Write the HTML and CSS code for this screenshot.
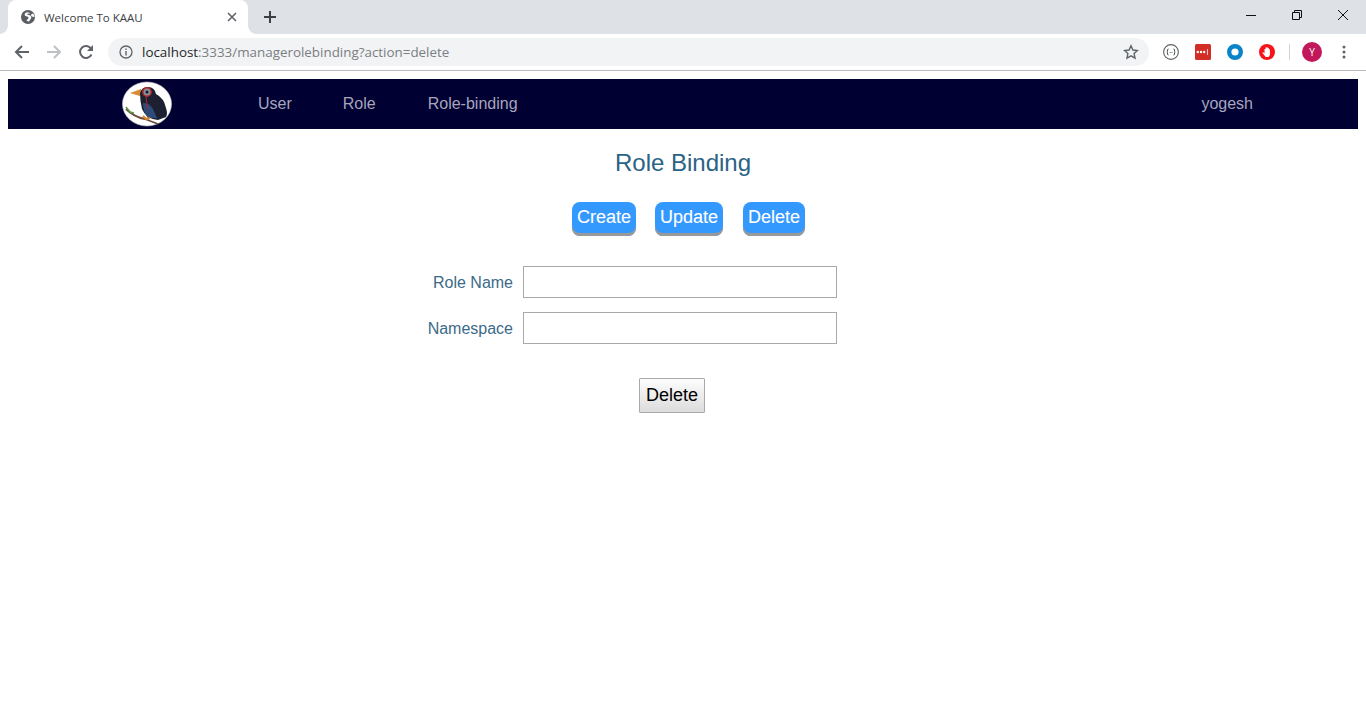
FILE: index.html
```html
<!DOCTYPE html>
<html lang="en">
<head>
<meta charset="utf-8">
<title>Welcome To KAAU</title>
<link rel="stylesheet" href="styles.css">
</head>
<body>
<header class="browser">
  <div class="tabstrip">
    <div class="tab">
      <svg class="favicon" width="16" height="16" viewBox="0 0 16 16"><circle cx="8" cy="8" r="7" fill="#5a5d61"/><path d="M8 3.200Q5 3.200 4.500 5.200q0 1.800 2.500 2.300 2 .3 1.500 1.700l-2 2.300q1.500 1.200 2.500 1 1.500-2.500 2-3 1-1.500-.5-2.700-1.500-.8-3-1-.8-.8.800-1.300 1.500 0 2-.2z" fill="#fff"/><path d="M13 4.500q-2 .5-2.300 1.700l1.800 1.500 2 .3q.2-2-1.500-3.500z" fill="#fff"/></svg>
      <span class="tab-title">Welcome To KAAU</span>
      <svg class="tab-close" width="10" height="10" viewBox="0 0 10 10"><path d="M1 1l8 8M9 1l-8 8" stroke="#5f6368" stroke-width="1.600" fill="none"/></svg>
    </div>
    <svg class="new-tab" width="12" height="12" viewBox="0 0 12 12"><path d="M6 0v12M0 6h12" stroke="#3c4043" stroke-width="2" fill="none"/></svg>
    <div class="window-controls">
      <svg width="10" height="10" viewBox="0 0 10 10"><path d="M0 5.500h10" stroke="#111" stroke-width="1" fill="none"/></svg>
      <svg width="10" height="10" viewBox="0 0 10 10"><path d="M.5 2.500h7v7h-7zM2.500 2.500v-2h7v7h-2" stroke="#111" stroke-width="1" fill="none"/></svg>
      <svg width="10" height="10" viewBox="0 0 10 10"><path d="M0 0l10 10M10 0L0 10" stroke="#111" stroke-width="1" fill="none"/></svg>
    </div>
  </div>
  <div class="toolbar">
    <svg class="tool back" width="16" height="16" viewBox="0 0 16 16"><path d="M15 8H2M8 2L2 8l6 6" stroke="#5f6368" stroke-width="2" fill="none"/></svg>
    <svg class="tool fwd" width="16" height="16" viewBox="0 0 16 16"><path d="M1 8h13M8 2l6 6-6 6" stroke="#bdc1c6" stroke-width="2" fill="none"/></svg>
    <svg class="tool reload" width="16" height="16" viewBox="0 0 16 16"><path d="M13.500 10.500A6 6 0 1 1 13 4.500" stroke="#5f6368" stroke-width="2" fill="none"/><path d="M15 1v6H9z" fill="#5f6368"/></svg>
    <div class="omnibox">
      <svg class="info" width="14" height="14" viewBox="0 0 14 14"><circle cx="7" cy="7" r="6" stroke="#5f6368" stroke-width="1.300" fill="none"/><path d="M7 6v4.500M7 3.500v1.500" stroke="#5f6368" stroke-width="1.400" fill="none"/></svg>
      <span class="url"><span class="host">localhost</span>:3333/managerolebinding?action=delete</span>
      <svg class="star" width="16" height="16" viewBox="0 0 16 16"><path d="M8 1.800l1.900 4.200 4.600.5-3.400 3.100.9 4.500L8 11.800 4 14.100l.9-4.500L1.500 6.500l4.600-.5z" stroke="#5f6368" stroke-width="1.400" fill="none"/></svg>
    </div>
    <div class="extensions">
      <svg width="16" height="16" viewBox="0 0 16 16"><circle cx="8" cy="8" r="7.400" stroke="#5f6368" stroke-width="1.100" fill="none"/><path d="M5.500 5Q4.500 5 4.500 6v1.200L3.800 8l.7.800V10q0 1 1 1M10.500 5q1 0 1 1v1.200l.7.800-.7.800V10q0 1-1 1M6.800 8.500h.8M8.600 8.500h.8" stroke="#4a4d50" stroke-width="1" fill="none"/></svg>
      <svg width="16" height="16" viewBox="0 0 16 16"><rect width="16" height="16" rx="1.500" fill="#d32d27"/><circle cx="2.800" cy="8" r="1.200" fill="#fff"/><circle cx="6" cy="8" r="1.200" fill="#fff"/><circle cx="9.200" cy="8" r="1.200" fill="#fff"/><path d="M12.500 5v6" stroke="#f3c0bd" stroke-width="1"/></svg>
      <svg width="16" height="16" viewBox="0 0 16 16"><circle cx="8" cy="8" r="5.800" stroke="#0a84c6" stroke-width="4.400" fill="none"/></svg>
      <svg width="16" height="16" viewBox="0 0 16 16"><circle cx="8" cy="8" r="8" fill="#f5141a"/><path d="M3.300 8.800l1-.5 1.200 1.200V5h1.100V3.600h1V3.200h1.100v.9h1.100v1.200h1.100V11l-1.300 2H6.700z" fill="#fff"/></svg>
    </div>
    <span class="divider"></span>
    <span class="avatar">Y</span>
    <svg class="menu" width="4" height="14" viewBox="0 0 4 14"><circle cx="2" cy="2" r="1.500" fill="#5f6368"/><circle cx="2" cy="7" r="1.500" fill="#5f6368"/><circle cx="2" cy="12" r="1.500" fill="#5f6368"/></svg>
  </div>
</header>
<div class="page">
  <nav class="navbar">
    <svg class="logo" width="50" height="46" viewBox="0 0 50 46">
      <ellipse cx="25" cy="23" rx="24.500" ry="22" fill="#fff" stroke="#c9c9d2" stroke-width=".6"/>
      <path d="M8 12l11-4 2 8z" fill="#d98b3a"/>
      <path d="M18 12Q20 5 27 6q6 1 7 7 8 4 10 14 2 6 0 9l-8 3Q24 38 20 28q-2-8-2-16z" fill="#1c2030"/>
      <path d="M21 22q7 0 10 6l4 9-9 0q-5-6-5-15z" fill="#2e4a78"/>
      <circle cx="25" cy="11" r="4.200" fill="#8a8d96" stroke="#a8282c" stroke-width="1.400"/>
      <circle cx="25" cy="11" r="1.500" fill="#15182a"/>
      <path d="M24 15l1.500 13" stroke="#a8282c" stroke-width="1"/>
      <path d="M4 28q8 8 19 10l13 5" stroke="#6b4a3a" stroke-width="1.800" fill="none"/>
      <path d="M4 26l4 5 4 1" stroke="#5f9a4a" stroke-width="1.600" fill="none"/>
      <path d="M21 35l3 3 4-1" stroke="#d9822b" stroke-width="2.200" fill="none"/>
    </svg>
    <a class="nav-link nav-user">User</a>
    <a class="nav-link nav-role">Role</a>
    <a class="nav-link nav-binding">Role-binding</a>
    <a class="nav-link nav-account">yogesh</a>
  </nav>
  <h2 class="title">Role Binding</h2>
  <div class="actions">
    <button class="action action-create">Create</button>
    <button class="action action-update">Update</button>
    <button class="action">Delete</button>
  </div>
  <form class="binding-form">
    <label class="field-label" for="role">Role Name</label>
    <input class="field-input" id="role" type="text">
    <label class="field-label" for="ns">Namespace</label>
    <input class="field-input" id="ns" type="text">
    <button class="submit" type="button">Delete</button>
  </form>
</div>
</body>
</html>
```
FILE: styles.css
```css
* { box-sizing: border-box; }
html, body { margin: 0; height: 728px; overflow: hidden; background: #fff; }
body { font-family: "Liberation Sans", Arial, sans-serif; }

.browser { height: 71px; display: flex; flex-direction: column; border-bottom: 1px solid #b9bbbe; }
.tabstrip { height: 34px; background: #dee1e6; display: flex; align-items: center; padding-left: 8px; }
.tab { position: relative; width: 240px; height: 34px; background: #fff; border-radius: 8px 8px 0 0; display: flex; align-items: center; padding: 0 11px 0 12px; }
.tab::before, .tab::after { content: ""; position: absolute; bottom: 0; width: 8px; height: 8px; background: radial-gradient(circle at var(--cx) 0, #dee1e6 7.500px, #fff 8px); }
.tab::before { left: -8px; --cx: 0; }
.tab::after { right: -8px; --cx: 8px; }
.favicon { flex: none; }
.tab-title { margin-left: 8px; flex: 1; font: 11.500px "Open Sans", "Noto Sans", sans-serif; color: #3c4043; }
.tab-close { flex: none; }
.new-tab { margin-left: 16px; flex: none; }
.window-controls { margin-left: auto; display: flex; gap: 36px; padding-right: 18px; align-items: center; height: 30px; margin-bottom: 4px; }

.toolbar { height: 36px; background: #fff; display: flex; align-items: center; padding-left: 14px; }
.tool { flex: none; }
.fwd { margin-left: 16px; }
.reload { margin-left: 16px; }
.omnibox { margin-left: 14px; width: 1041px; height: 28px; border-radius: 14px; background: #f1f3f4; display: flex; align-items: center; padding: 0 10px 0 11px; }
.info { flex: none; }
.url { margin-left: 9px; flex: 1; font: 13.400px/20px "Open Sans", "Noto Sans", sans-serif; color: #7b7e82; white-space: nowrap; }
.host { color: #26282b; }
.star { flex: none; }
.extensions { margin-left: 14px; display: flex; gap: 16px; }
.extensions svg { flex: none; }
.divider { margin-left: 14px; width: 1px; height: 16px; background: #d0d2d5; }
.avatar { margin-left: 12px; width: 20px; height: 20px; border-radius: 50%; background: #c2185b; color: #fff; font: 10px/20px "Open Sans", sans-serif; text-align: center; flex: none; }
.menu { margin-left: 20px; flex: none; }

.page { padding: 8px; }
.navbar { height: 50px; background: #000033; display: flex; align-items: center; padding-left: 114px; }
.logo { flex: none; }
.nav-link { font-size: 16px; color: #a6a6bd; }
.nav-user { margin-left: 86px; }
.nav-role { margin-left: 51px; }
.nav-binding { margin-left: 52px; }
.nav-account { margin-left: auto; margin-right: 105px; }

.title { margin: 20px 0 0; height: 28px; font-size: 24px; line-height: 28px; font-weight: 400; color: #2a6385; text-align: center; }
.actions { margin: 25px 0 0 564px; display: flex; }
.action { height: 34px; padding: 0 5px 3px; border: 0; border-radius: 8px; background: #3399ff; color: #fff; font: 18px "Liberation Sans", Arial, sans-serif; -webkit-text-stroke: .1px #fff; box-shadow: inset 0 -3px 0 #999; }
.action-create { margin-right: 19px; }
.action-update { margin-right: 20px; }

.binding-form { margin-top: 30px; display: grid; grid-template-columns: 505px 314px; column-gap: 10px; row-gap: 14px; align-items: center; }
.field-label { font-size: 16px; line-height: 20px; padding-top: 2px; color: #3b6b88; text-align: right; }
.field-input { height: 32px; border: 1px solid #a9a9a9; background: #fff; padding: 0 4px; }
.submit { grid-column: 1 / -1; margin: 20px 0 0 631px; width: 66px; height: 35px; border: 1px solid #a9a9a9; border-radius: 1px; background: linear-gradient(#fdfdfd, #dcdcdc); color: #000; font: 18px "Liberation Sans", Arial, sans-serif; padding: 0; }
```
